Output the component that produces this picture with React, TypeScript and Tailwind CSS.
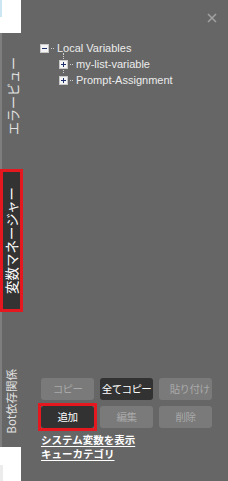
import React from 'react';

const cjk = { fontFamily: '"Noto Sans CJK JP", "Noto Sans", sans-serif' };
const latin = { fontFamily: '"Liberation Sans", Arial, sans-serif' };

function TreeBox({ open }: { open?: boolean }) {
  return (
    <svg width="9" height="9" viewBox="0 0 9 9" className="shrink-0">
      <rect x="0.5" y="0.5" width="8" height="8" fill="#f4f4f4" stroke="#c8c8c8" />
      <rect x="2" y="4" width="5" height="1" fill="#1c2f6b" />
      {!open && <rect x="4" y="2" width="1" height="5" fill="#1c2f6b" />}
    </svg>
  );
}

function TreeRow({ open, label }: { open?: boolean; label: string }) {
  return (
    <div className="flex h-[16px] items-center">
      <TreeBox open={open} />
      <span className="ml-[2px] w-[3px] border-t border-dotted border-[#cfcfcf]" />
      <span className="ml-[3px] text-[11px] leading-none text-[#ececec]" style={latin}>
        {label}
      </span>
    </div>
  );
}

function SideTab({ label, size, active }: { label: string; size: string; active?: boolean }) {
  return (
    <div
      className={`[writing-mode:vertical-rl] [text-orientation:sideways] rotate-180 whitespace-nowrap leading-none ${size} ${
        active ? 'text-white' : 'text-[#e2e2e2]'
      }`}
      style={cjk}
    >
      {label}
    </div>
  );
}

type Btn = { label: string; dark?: boolean; marked?: boolean; extra?: string };

const buttons: Btn[] = [
  { label: 'コピー' },
  { label: '全てコピー', dark: true },
  { label: '貼り付け', extra: 'pl-[8px]' },
  { label: '追加', dark: true, marked: true },
  { label: '編集' },
  { label: '削除' },
];

function Button({ b }: { b: Btn }) {
  const inner = (
    <div
      className={`flex h-[22px] items-center justify-center overflow-hidden whitespace-nowrap rounded-[3px] text-[10.5px] leading-none tracking-[-0.6px] ${
        b.dark ? 'bg-[#323232] text-white' : 'bg-[#7a7a7a] text-[#a9a9a9]'
      } ${b.extra ?? ''}`}
      style={cjk}
    >
      {b.label}
    </div>
  );
  if (!b.marked) return inner;
  return <div className="-m-[3px] border-[3px] border-[#e5171f]">{inner}</div>;
}

export default function App() {
  return (
    <div className="flex h-[481px] w-[228px] overflow-hidden bg-[#666666]">
      {/* left tab strip */}
      <div className="flex w-[21px] shrink-0 flex-col">
        <div className="flex h-[33px] shrink-0 bg-white">
          <div className="h-[17px] w-[2px] bg-[#cde6f3]" />
        </div>
        <div className="flex flex-1 flex-col items-start border-l-2 border-[#7e7e7e]">
          <div className="mt-[24px] flex h-[78px] w-[20px] shrink-0 items-center justify-center">
            <SideTab label="エラービュー" size="text-[13px]" />
          </div>
          <div className="-ml-[2px] mt-[34px] flex h-[143px] w-[23px] shrink-0 items-center justify-center border-[3px] border-[#e5171f] bg-[#333333]">
            <SideTab label="変数マネージャー" size="text-[13.5px]" active />
          </div>
          <div className="mt-[58px] flex h-[63px] w-[20px] shrink-0 items-center justify-center">
            <SideTab label="Bot依存関係" size="text-[11.5px]" />
          </div>
        </div>
        <div className="flex h-[34px] shrink-0 items-end bg-white">
          <div className="h-[16px] w-[3px] bg-[#ececec]" />
        </div>
      </div>

      {/* main panel */}
      <div className="flex flex-1 flex-col">
        <div className="flex justify-end pr-[11px] pt-[13px]">
          <svg width="10" height="10" viewBox="0 0 10 10">
            <path d="M1 1L9 9M9 1L1 9" stroke="#a0a0a0" strokeWidth="1.6" />
          </svg>
        </div>

        <div className="mt-[17px] pl-[19px]">
          <TreeRow open label="Local Variables" />
          <div className="relative pl-[19px]">
            <div className="absolute left-[23px] top-[-3px] h-[20px] border-l border-dotted border-[#cfcfcf]" />
            <div className="relative">
              <TreeRow label="my-list-variable" />
              <TreeRow label="Prompt-Assignment" />
            </div>
          </div>
        </div>

        <div className="mt-auto pb-[20px] pl-[20px]">
          <div className="grid grid-cols-[53px_53px_53px] gap-x-[6px] gap-y-[6px]">
            {buttons.map((b) => (
              <Button key={b.label} b={b} />
            ))}
          </div>
          <div
            className="mt-[5px] flex flex-col items-start text-[10.5px] font-bold leading-[14px] text-white"
            style={cjk}
          >
            <span className="underline underline-offset-2">システム変数を表示</span>
            <span className="underline underline-offset-2">キューカテゴリ</span>
          </div>
        </div>
      </div>
    </div>
  );
}
